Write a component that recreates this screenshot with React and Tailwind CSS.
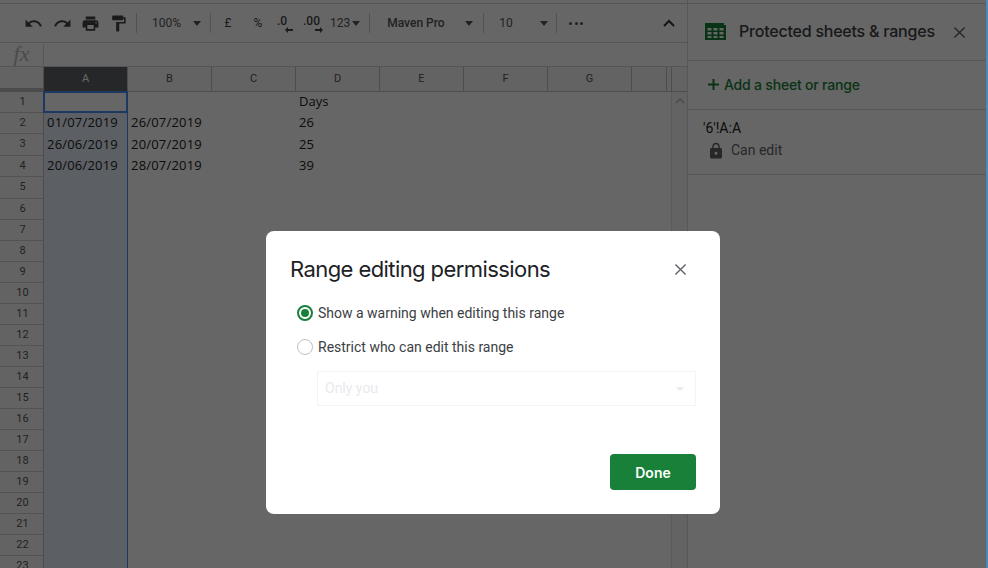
import React from "react";

const Ic = ({ d, s = 18, c = "#444", className = "" }) => (
  <svg width={s} height={s} viewBox="0 0 24 24" fill={c} className={"shrink-0 " + className}><path d={d} /></svg>
);
const Caret = ({ className = "" }) => <div className={"shrink-0 w-0 h-0 border-x-[4.5px] border-x-transparent border-t-[5px] border-t-[#555] " + className} />;
const Sep = ({ className = "" }) => <div className={"w-px h-[20px] bg-[#ccc] shrink-0 " + className} />;
const X = ({ s = 14, c = "#5f6368" }) => (
  <svg width={s} height={s} viewBox="0 0 14 14" stroke={c} strokeWidth="1.5" fill="none"><path d="M1.5 1.5l11 11M12.500 1.500l-11 11" /></svg>
);

const cols = [["A", 84], ["B", 84], ["C", 84], ["D", 84], ["E", 84], ["F", 84], ["G", 84], ["", 35], ["", 5]];
const rows = [
  ["", "", "Days"],
  ["01/07/2019", "26/07/2019", "26"],
  ["26/06/2019", "20/07/2019", "25"],
  ["20/06/2019", "28/07/2019", "39"],
];
const nums = Array.from({ length: 23 }, (_, i) => i + 1);
const tb = "text-[12px] font-['Roboto',sans-serif] shrink-0";
const rowH = (n) => (n === 3 || n === 5 ? "h-[22px]" : "h-[21px]");

function Toolbar() {
  return (
    <div className="h-[40px] mt-[3px] border-t border-b border-[#d4d4d4] bg-[#fff] flex items-center pl-[24px] pr-[12px] text-[#444] shrink-0">
      <Ic s={19} d="M12.5 8c-2.65 0-5.05 1-6.9 2.6L2 7v9h9l-3.62-3.62A7.96 7.96 0 0 1 12.5 10.5c3.54 0 6.55 2.31 7.6 5.5l2.37-.78C21.08 11.03 17.15 8 12.5 8z" />
      <Ic s={19} className="ml-[10px]" d="M18.4 10.6C16.55 9 14.15 8 11.5 8 6.85 8 2.92 11.03 1.54 15.22L3.9 16c1.05-3.19 4.05-5.5 7.6-5.5 1.95 0 3.73.72 5.12 1.88L13 16h9V7l-3.6 3.6z" />
      <Ic s={19} className="ml-[9px]" d="M19 8H5c-1.66 0-3 1.34-3 3v6h4v4h12v-4h4v-6c0-1.66-1.34-3-3-3zm-3 11H8v-5h8v5zm3-7c-.55 0-1-.45-1-1s.45-1 1-1 1 .45 1 1-.45 1-1 1zm-1-9H6v4h12V3z" />
      <Ic s={19} className="ml-[9px]" d="M18 4V3c0-.55-.45-1-1-1H5c-.55 0-1 .45-1 1v4c0 .55.45 1 1 1h12c.55 0 1-.45 1-1V6h1v4H9v11c0 .55.45 1 1 1h2c.55 0 1-.45 1-1v-9h8V4h-3z" />
      <Sep className="ml-[8px]" />
      <span className={"ml-[15px] text-[#555] w-[30px] " + tb}>100%</span>
      <Caret className="ml-[11px]" />
      <Sep className="ml-[9px]" />
      <span className={"ml-[12px] w-[10px] text-center " + tb}>£</span>
      <span className={"ml-[20px] w-[10px] text-center " + tb}>%</span>
      <div className={"ml-[14px] relative w-[12px] h-[18px] leading-[14px] font-medium " + tb}>
        .0
        <svg width="8" height="6" viewBox="0 0 8 6" className="absolute left-[8px] top-[13px]"><path d="M0 3l3-3v2h5v2H3v2z" fill="#444" /></svg>
      </div>
      <div className={"ml-[14px] relative w-[16px] h-[18px] leading-[14px] font-medium " + tb}>
        .00
        <svg width="8" height="6" viewBox="0 0 8 6" className="absolute left-[12px] top-[13px]"><path d="M8 3L5 0v2H0v2h5v2z" fill="#444" /></svg>
      </div>
      <span className={"ml-[11px] text-[#555] " + tb}>123</span>
      <Caret className="ml-[2px]" />
      <Sep className="ml-[9px]" />
      <span className={"ml-[17px] font-medium text-[#555] w-[70px] " + tb}>Maven Pro</span>
      <Caret className="ml-[8px]" />
      <Sep className="ml-[10px]" />
      <span className={"ml-[15px] text-[#555] w-[41px] " + tb}>10</span>
      <Caret />
      <Sep className="ml-[8px]" />
      <div className="ml-[12px] flex gap-[2.5px] shrink-0">
        <span className="w-[3px] h-[3px] rounded-full bg-[#555]" />
        <span className="w-[3px] h-[3px] rounded-full bg-[#555]" />
        <span className="w-[3px] h-[3px] rounded-full bg-[#555]" />
      </div>
      <svg width="12" height="8" viewBox="0 0 12 8" className="ml-auto shrink-0"><path d="M1 7l5-5 5 5" stroke="#333" strokeWidth="2" fill="none" /></svg>
    </div>
  );
}

function Grid() {
  return (
    <div className="flex-1 min-h-0 overflow-hidden flex flex-col">
      <div className="h-[25px] flex border-b border-[#c0c0c0] bg-[#f8f8f8] shrink-0 text-[11px] font-['Roboto',sans-serif] text-[#555]">
        <div className="w-[44px] shrink-0 border-r border-[#c0c0c0] border-b-[3px] border-b-[#bbb]" />
        {cols.map(([n, w], i) => (
          <div key={i} style={{ width: w }} className={"shrink-0 flex items-center justify-center border-r border-[#c0c0c0] " + (n === "A" ? "bg-[#5f6368] text-white" : "")}>{n}</div>
        ))}
      </div>
      <div className="flex flex-1 min-h-0">
        <div className="w-[44px] shrink-0 bg-[#f8f8f8] border-r border-[#c0c0c0] text-[11px] font-['Roboto',sans-serif] text-[#555]">
          {nums.map((n) => (
            <div key={n} className={rowH(n) + " border-b border-[#d0d0d0] flex items-center justify-center pl-[2px]"}>{n}</div>
          ))}
        </div>
        <div className="w-[84px] shrink-0 bg-[#e6eefb] border-r border-[#4a90f8] flex flex-col font-['Open_Sans',sans-serif] text-[13px] text-[#222] tracking-[0.2px]">
          <div className="h-[22px] -mt-px border-2 border-[#4a90f8] bg-white -ml-px -mr-px shrink-0" />
          {rows.slice(1).map((r, i) => (
            <div key={i} className={rowH(i + 2) + " flex items-center pl-[3px] pb-[1px] shrink-0"}>{r[0]}</div>
          ))}
        </div>
        <div className="flex-1 bg-white font-['Open_Sans',sans-serif] text-[13px] text-[#222]">
          {rows.map((r, i) => (
            <div key={i} className={rowH(i + 1) + " flex items-center pb-[1px]"}>
              <div className="w-[84px] pl-[3px] tracking-[0.2px]">{r[1]}</div>
              <div className="w-[84px]" />
              <div className="w-[84px] pl-[3px]">{r[2]}</div>
            </div>
          ))}
        </div>
        <div className="w-[16px] shrink-0 bg-[#f8f8f8] border-l border-[#e0e0e0] flex justify-center pt-[6px]">
          <svg width="10" height="6" viewBox="0 0 10 6"><path d="M1 5l4-4 4 4" stroke="#bbb" strokeWidth="1.5" fill="none" /></svg>
        </div>
      </div>
    </div>
  );
}

function Panel() {
  return (
    <div className="w-[301px] shrink-0 bg-white border-l border-[#dadada] flex flex-col">
      <div className="h-[61px] border-b border-[#dadada] flex items-center pl-[17px] shrink-0 relative">
        <div className="absolute left-0 right-0 top-[3px] h-px bg-[#d4d4d4]" />
        <svg width="21" height="17" viewBox="0 0 21 17" className="shrink-0 mt-[2px]">
          <path d="M0 0h19v2h2v15H0z" fill="#188038" />
          <path d="M2.500 5h4v2.500h-4zM8.500 5h4v2.500h-4zM14.500 5h4v2.500h-4zM2.500 9h4v2.500h-4zM8.500 9h4v2.500h-4zM14.500 9h4v2.500h-4zM2.500 13h4v2h-4zM8.500 13h4v2h-4zM14.500 13h4v2h-4z" fill="#fff" />
        </svg>
        <span className="ml-[13px] mt-[2px] text-[16px] font-medium text-[#3c4043] font-['Inter','Noto_Sans',sans-serif] tracking-[-0.22px] whitespace-nowrap">Protected sheets &amp; ranges</span>
        <div className="ml-[18px] mt-[4px]"><X s={13} /></div>
      </div>
      <div className="h-[49px] border-b border-[#dadada] flex items-center pl-[20px] pb-[2px] shrink-0">
        <svg width="11" height="11" viewBox="0 0 11 11"><path d="M4.500 0h2v4.500H11v2H6.500V11h-2V6.500H0v-2h4.500z" fill="#188038" /></svg>
        <span className="ml-[5px] text-[14px] font-medium text-[#188038] font-['Inter',sans-serif] tracking-[-0.2px]">Add a sheet or range</span>
      </div>
      <div className="h-[65px] border-b border-[#dadada] pt-[10px] pl-[15px] shrink-0 font-['Roboto',sans-serif]">
        <div className="text-[14px] leading-[16px] text-[#222]">'6'!A:A</div>
        <div className="flex items-center mt-[4px] pl-[4px]">
          <Ic s={18} c="#5f6368" d="M18 8h-1V6c0-2.760-2.240-5-5-5S7 3.240 7 6v2H6c-1.100 0-2 .900-2 2v10c0 1.100.900 2 2 2h12c1.100 0 2-.900 2-2V10c0-1.100-.900-2-2-2zm-6 9c-1.100 0-2-.900-2-2s.900-2 2-2 2 .900 2 2-.900 2-2 2zm3.100-9H8.900V6c0-1.710 1.390-3.100 3.100-3.100 1.710 0 3.100 1.390 3.100 3.100v2z" />
          <span className="ml-[6px] text-[14px] text-[#5f6368]">Can edit</span>
        </div>
      </div>
    </div>
  );
}

function Dialog() {
  return (
    <div className="w-[454px] h-[283px] bg-white rounded-[8px] flex flex-col">
      <div className="flex items-center justify-between pl-[24px] pr-[33px] pt-[11px] h-[65px] shrink-0">
        <span className="text-[22px] text-[#202124] font-['Inter','Noto_Sans',sans-serif] tracking-[-0.58px] whitespace-nowrap leading-[28px]">Range editing permissions</span>
        <X s={13} />
      </div>
      <div className="pl-[31px] font-['Roboto',sans-serif] text-[14px] text-[#3c4043]">
        <div className="flex items-center h-[34px]">
          <div className="w-[16px] h-[16px] rounded-full border-2 border-[#188038] flex items-center justify-center"><div className="w-[8px] h-[8px] rounded-full bg-[#188038]" /></div>
          <span className="ml-[5px]">Show a warning when editing this range</span>
        </div>
        <div className="flex items-center h-[34px]">
          <div className="w-[16px] h-[16px] rounded-full border border-[#bdc1c6]" />
          <span className="ml-[5px]">Restrict who can edit this range</span>
        </div>
        <div className="ml-[20px] mt-[7px] w-[379px] h-[35px] border border-[#f1f3f4] rounded-[2px] flex items-center pl-[7px] pr-[11px] text-[#e8eaed]">
          <span className="text-[14px]">Only you</span>
          <div className="ml-auto w-0 h-0 border-x-[4px] border-x-transparent border-t-[4px] border-t-[#e8eaed]" />
        </div>
      </div>
      <div className="mt-auto mb-[24px] mr-[24px] self-end w-[86px] h-[36px] bg-[#188038] rounded-[4px] flex items-center justify-center text-white text-[14px] font-semibold font-['Inter',sans-serif]">Done</div>
    </div>
  );
}

export default function App() {
  return (
    <div className="relative w-[988px] h-[568px] overflow-hidden bg-white flex">
      <div className="w-[687px] shrink-0 flex flex-col">
        <Toolbar />
        <div className="h-[24px] shrink-0 border-b border-[#d4d4d4] flex items-center">
          <span className="w-[43px] text-center text-[22px] italic text-[#bbb] font-['Liberation_Serif',serif] leading-none -mt-[2px]">fx</span>
          <div className="w-px h-[20px] bg-[#d4d4d4]" />
        </div>
        <Grid />
      </div>
      <Panel />
      <div className="absolute inset-0 bg-black/60 flex items-start justify-center pt-[231px] pr-[2px]">
        <Dialog />
      </div>
      <div className="absolute right-0 top-0 bottom-0 w-[2px] bg-[#4f87b5]" />
    </div>
  );
}
